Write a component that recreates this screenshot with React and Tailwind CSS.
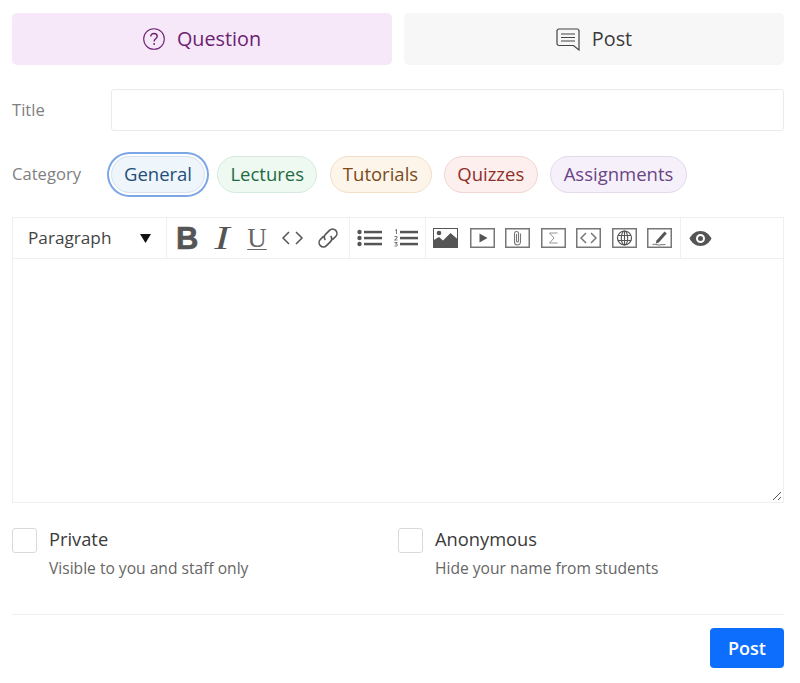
import React from "react";

const Framed = ({ children }) => (
  <svg width="25" height="20" viewBox="0 0 25 20" fill="none" stroke="#777" className="block">
    <rect x=".75" y=".75" width="23.500" height="18.500" strokeWidth="1.500" />
    {children}
  </svg>
);

const Sep = () => <div className="w-px self-stretch bg-[#efefef]" />;

const pills = [
  ["General", "bg-[#eef5fb] border-[#d5e2ee] text-[#1f4e79] w-[94px] ring-2 ring-offset-2 ring-[#7ba7e6] ring-offset-white"],
  ["Lectures", "bg-[#eef9f2] border-[#d5eadd] text-[#1f6b3f] w-[100px]"],
  ["Tutorials", "bg-[#fdf5ea] border-[#f1dfc8] text-[#7a4a1c] w-[102px]"],
  ["Quizzes", "bg-[#fcefed] border-[#f0d5d1] text-[#8e2f2a] w-[94px]"],
  ["Assignments", "bg-[#f6f0fa] border-[#e4d9ec] text-[#6a4585] w-[137px]"],
];

export default function App() {
  return (
    <div className="w-[796px] h-[683px] bg-white px-3 pt-[13px] font-['Open_Sans',sans-serif] overflow-hidden">
      <div className="flex gap-3">
        <div className="flex-1 h-[52px] rounded-[5px] bg-[#f6e8f8] text-[#6b2170] flex items-center justify-center gap-[12px] text-[19.800px]">
          <svg width="22" height="22" viewBox="0 0 22 22" fill="none" stroke="#6b2170" strokeWidth="1.100">
            <circle cx="11" cy="11" r="10.300" />
            <path d="M7.800 8.600c0-1.900 1.400-3.100 3.200-3.100s3.200 1.100 3.200 2.800c0 2.400-3.100 2.500-3.100 5.100" strokeWidth="1.400" />
            <circle cx="11.100" cy="16" r=".9" fill="#6b2170" stroke="none" />
          </svg>
          <span>Question</span>
        </div>
        <div className="flex-1 h-[52px] rounded-[5px] bg-[#f7f7f7] text-[#3a3a3a] flex items-center justify-center gap-[12px] text-[19.800px]">
          <svg width="24" height="23" viewBox="0 0 24 23" fill="none" stroke="#444" strokeWidth="1.200">
            <path d="M3 1h18a2 2 0 0 1 2 2v19l-5.500-4.500H3a2 2 0 0 1-2-2V3a2 2 0 0 1 2-2z" />
            <path d="M5 6h14M5 9.500h14M5 13h14" />
          </svg>
          <span>Post</span>
        </div>
      </div>

      <div className="flex items-center mt-6">
        <label className="w-[99px] text-[16.600px] text-[#808080]">Title</label>
        <div className="flex-1 h-[42px] border border-[#ebebeb] rounded-[3px]" />
      </div>

      <div className="flex items-center mt-[25px]">
        <label className="w-[99px] text-[16.600px] text-[#808080]">Category</label>
        <div className="flex gap-[12.250px]">
          {pills.map(([name, cls]) => (
            <div key={name} className={`h-[37px] rounded-full border flex items-center justify-center text-[18.500px] pb-[2px] ${cls}`}>
              {name}
            </div>
          ))}
        </div>
      </div>

      <div className="mt-6 border border-[#efefef] h-[286px] relative">
        <div className="h-[41px] border-b border-[#efefef] flex items-stretch text-[#555]">
          <div className="w-[153px] flex items-center justify-between pl-[15px] pr-[15px] text-[17.200px] text-[#444]">
            <span>Paragraph</span>
            <svg width="11" height="9" viewBox="0 0 11 9"><path d="M0 0h11L5.500 9z" fill="#111" /></svg>
          </div>
          <Sep />
          <div className="w-[182px] flex items-center pl-[9px] gap-[13px]">
            <span className="font-['Liberation_Sans',sans-serif] font-bold text-[31px] leading-none w-[22px] text-[#555] [-webkit-text-stroke:0.6px_#555]">B</span>
            <span className="font-['Liberation_Serif',serif] italic text-[33px] leading-none w-[22px] text-[#555] text-center scale-x-[1.4]">I</span>
            <span className="font-['Liberation_Serif',serif] text-[27px] leading-none underline decoration-1 underline-offset-2 w-[22px] text-[#666] text-center">U</span>
            <svg width="23" height="14" viewBox="0 0 23 14" fill="none" stroke="#555" strokeWidth="1.500"><path d="M8 1 2 7l6 6M15 1l6 6-6 6" /></svg>
            <svg width="26" height="26" viewBox="0 0 24 24" fill="none" stroke="#555" strokeWidth="1.500" className="-ml-[2px]">
              <g transform="rotate(-45 12 12)">
                <path d="M10.500 8H6a4 4 0 0 0 0 8h5a4 4 0 0 0 4-3.500" />
                <path d="M13.500 16H18a4 4 0 0 0 0-8h-5a4 4 0 0 0-4 3.500" />
              </g>
            </svg>
          </div>
          <Sep />
          <div className="w-[75px] flex items-center pl-[7px] gap-[12px]">
            <svg width="25" height="18" viewBox="0 0 25 18" fill="#555">
              <circle cx="2.500" cy="3" r="2.200" /><circle cx="2.500" cy="9" r="2.200" /><circle cx="2.500" cy="15" r="2.200" />
              <rect x="7" y="1.800" width="18" height="2.500" /><rect x="7" y="7.800" width="18" height="2.500" /><rect x="7" y="13.800" width="18" height="2.500" />
            </svg>
            <svg width="24" height="18" viewBox="0 0 24 18" fill="#555">
              <rect x="6" y="1.800" width="18" height="2.500" /><rect x="6" y="7.800" width="18" height="2.500" /><rect x="6" y="13.800" width="18" height="2.500" />
              <path d="M1 1.500 2.500.5v4.500" stroke="#555" strokeWidth=".8" fill="none" />
              <path d="M.5 7.500h2.500v1.500L.5 11h3" stroke="#555" strokeWidth=".8" fill="none" />
              <path d="M.5 13.500h2.800L1.500 15c1.500 0 2 .5 2 1s-1 1.500-3 1" stroke="#555" strokeWidth=".8" fill="none" />
            </svg>
          </div>
          <Sep />
          <div className="w-[254px] flex items-center pl-[7px] gap-[10.500px]">
            <svg width="25" height="20" viewBox="0 0 25 20" className="block mr-[1px]">
              <rect x=".5" y=".5" width="24" height="19" fill="#fff" stroke="#555" />
              <circle cx="6" cy="5" r="2.300" fill="#555" />
              <path d="M0 20v-7.500l6-3.500 4 3.500 7.500-7.500 7.500 6.500V20z" fill="#555" />
            </svg>
            <Framed><path d="M9.500 5.500v9l8-4.500z" fill="#555" stroke="none" /></Framed>
            <Framed>
              <path d="M15.500 5.500v8.500a3 3 0 0 1-6 0V5.500a2 2 0 0 1 4 0V13a1 1 0 0 1-2 0V6" strokeWidth="1.100" />
            </Framed>
            <Framed><path d="M16.500 5H8.500l4.500 5-4.500 5h8" strokeWidth=".9" stroke="#888" /></Framed>
            <Framed><path d="M10 5 5 10l5 5M15 5l5 5-5 5" strokeWidth="1.500" /></Framed>
            <Framed>
              <circle cx="12.500" cy="10" r="7" strokeWidth="1.200" stroke="#555" />
              <ellipse cx="12.500" cy="10" rx="3.200" ry="7" strokeWidth="1.100" stroke="#555" />
              <path d="M6 7.500h13M6 12.500h13M12.500 3v14" strokeWidth="1.100" stroke="#555" />
            </Framed>
            <Framed>
              <path d="M9.500 12.500 17.500 3.500l2.300 2-8 9-3 1z" fill="#555" stroke="none" />
              <path d="M5.500 16.500c3-1 4 .5 6 .5s3-.5 7-.5" strokeWidth="1.100" />
            </Framed>
          </div>
          <Sep />
          <div className="flex items-center pl-[8px]">
            <svg width="23" height="15" viewBox="0 0 22 15">
              <path fillRule="evenodd" fill="#555" d="M11 0c5 0 9 3.500 11 7.500C20 11.500 16 15 11 15S2 11.500 0 7.500C2 3.500 6 0 11 0zm0 3a4.500 4.500 0 1 0 0 9 4.500 4.500 0 0 0 0-9zm0 2a2.500 2.500 0 1 1 0 5 2.500 2.500 0 0 1 0-5z" />
            </svg>
          </div>
        </div>
        <svg width="10" height="10" viewBox="0 0 10 10" stroke="#555" strokeWidth="1" className="absolute right-[1px] bottom-[1px]">
          <path d="M1 9 9 1M6 9l3-3" />
        </svg>
      </div>

      <div className="flex mt-[25px]">
        <div className="w-[386px] flex gap-3">
          <div className="w-[25px] h-[25px] border border-[#d9d9d9] rounded-[3px] shrink-0" />
          <div className="-mt-px">
            <div className="text-[18.300px] leading-[24px] text-[#3a3a3a]">Private</div>
            <div className="text-[15.600px] leading-[20px] mt-[7px] text-[#666]">Visible to you and staff only</div>
          </div>
        </div>
        <div className="flex gap-3">
          <div className="w-[25px] h-[25px] border border-[#d9d9d9] rounded-[3px] shrink-0" />
          <div className="-mt-px">
            <div className="text-[18.300px] leading-[24px] text-[#3a3a3a]">Anonymous</div>
            <div className="text-[15.600px] leading-[20px] mt-[7px] text-[#666]">Hide your name from students</div>
          </div>
        </div>
      </div>

      <div className="mt-[36px] border-t border-[#efefef] pt-[13px] flex justify-end">
        <button className="w-[74px] h-[40px] rounded-[4px] bg-[#0d6efd] text-white text-[18px] font-semibold">Post</button>
      </div>
    </div>
  );
}
